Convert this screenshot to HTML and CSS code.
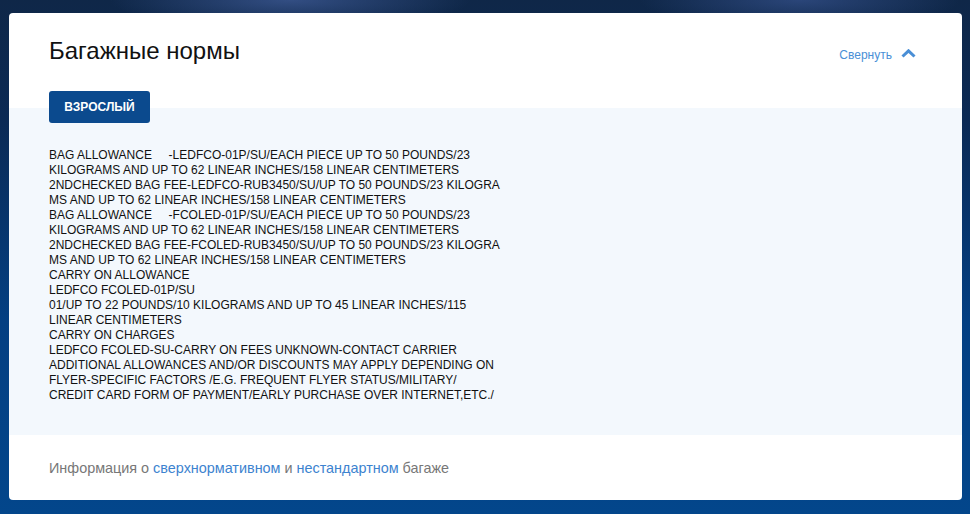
FILE: index.html
```html
<!DOCTYPE html>
<html>
<head>
<meta charset="utf-8">
<title>Багажные нормы</title>
<link rel="stylesheet" href="styles.css">
</head>
<body>
<div class="card">
    <div class="head">
        <h2 class="title">Багажные нормы</h2>
        <a href="javascript:;" class="toggle">Свернуть
            <svg width="15" height="9" viewBox="0 0 15 9"><polyline points="1.5,7.5 7.5,1.8 13.5,7.5" fill="none" stroke="#4a8fd6" stroke-width="3"/></svg>
        </a>
    </div>
    <div class="rules">
        <a href="javascript:;" class="tab">ВЗРОСЛЫЙ</a>
        <div class="rules_text">BAG ALLOWANCE     -LEDFCO-01P/SU/EACH PIECE UP TO 50 POUNDS/23
KILOGRAMS AND UP TO 62 LINEAR INCHES/158 LINEAR CENTIMETERS
2NDCHECKED BAG FEE-LEDFCO-RUB3450/SU/UP TO 50 POUNDS/23 KILOGRA
MS AND UP TO 62 LINEAR INCHES/158 LINEAR CENTIMETERS
BAG ALLOWANCE     -FCOLED-01P/SU/EACH PIECE UP TO 50 POUNDS/23
KILOGRAMS AND UP TO 62 LINEAR INCHES/158 LINEAR CENTIMETERS
2NDCHECKED BAG FEE-FCOLED-RUB3450/SU/UP TO 50 POUNDS/23 KILOGRA
MS AND UP TO 62 LINEAR INCHES/158 LINEAR CENTIMETERS
CARRY ON ALLOWANCE
LEDFCO FCOLED-01P/SU
01/UP TO 22 POUNDS/10 KILOGRAMS AND UP TO 45 LINEAR INCHES/115
LINEAR CENTIMETERS
CARRY ON CHARGES
LEDFCO FCOLED-SU-CARRY ON FEES UNKNOWN-CONTACT CARRIER
ADDITIONAL ALLOWANCES AND/OR DISCOUNTS MAY APPLY DEPENDING ON
FLYER-SPECIFIC FACTORS /E.G. FREQUENT FLYER STATUS/MILITARY/
CREDIT CARD FORM OF PAYMENT/EARLY PURCHASE OVER INTERNET,ETC./</div>
    </div>
    <div class="foot">
        Информация о <a href="javascript:;">сверхнормативном</a> и <a href="javascript:;">нестандартном</a> багаже
    </div>
</div>
</body>
</html>
```

FILE: styles.css
```css
*{margin:0; padding:0;}
html,body{height:100%;}
body{
    font-family:"Liberation Sans", Arial, sans-serif;
    background:
        radial-gradient(ellipse 180px 30px at 290px 0, rgba(80,110,180,.55), transparent),
        radial-gradient(ellipse 160px 30px at 800px 0, rgba(70,100,170,.5), transparent),
        linear-gradient(#0f2748 0, #0b2a55 120px, #033f82 320px, #03468b 100%);
    padding:13px 8px 14px 9px;
    box-sizing:border-box;
}
a{text-decoration:none;}
.card{background:#fff; border-radius:4px; overflow:hidden; width:953px;}
.head{display:flex; justify-content:space-between; align-items:baseline; padding:24px 46px 43px 40px;}
.title{font-size:24px; line-height:28px; font-weight:normal; color:#111;}
.toggle{font-size:12px; color:#4a8fd6; display:flex; align-items:center;}
.toggle svg{display:block; margin-left:9px; position:relative; top:-2px;}
.rules{background:#f3f8fd; padding:0 40px 32px 40px; display:flow-root;}
.tab{display:block; margin-top:-17px; width:101px; height:32px; line-height:32px; text-align:center;
    background:#0b4a8e; color:#fff; font-size:12px; font-weight:bold; border-radius:3px;}
.rules_text{margin-top:25px; font-size:12px; line-height:15px; color:#111; white-space:pre;}
.foot{padding:24px 40px 23px 40px; font-size:14.4px; line-height:18px; color:#777;}
.foot a{color:#3d83cf;}
```
